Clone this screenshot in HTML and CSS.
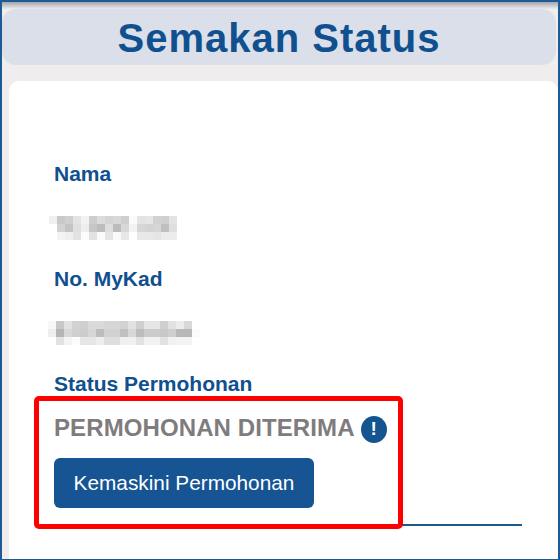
FILE: index.html
```html
<!DOCTYPE html>
<html lang="en">
<head>
    <meta charset="UTF-8">
    <meta name="viewport" content="width=device-width, initial-scale=1.0">
    <title>Semakan Status</title>
    <link rel="stylesheet" href="styles.css">
</head>
<body>
    <div class="screen">
        <div class="top-shadow"></div>
        <h1 class="title-bar">Semakan Status</h1>

        <div class="card">
            <div class="label first">Nama</div>
            <svg class="blur blur-name" width="128" height="24" shape-rendering="crispEdges" aria-hidden="true">
                <rect x="0" y="0" fill="#f0f0f0"/><rect x="8" y="0" fill="#c9c9c9"/><rect x="16" y="0" fill="#cfcfcf"/><rect x="24" y="0" fill="#e3e3e3"/><rect x="32" y="0" fill="#f2f2f2"/><rect x="40" y="0" fill="#cdcdcd"/><rect x="48" y="0" fill="#dcdcdc"/><rect x="56" y="0" fill="#d4d4d4"/><rect x="64" y="0" fill="#d8d8d8"/><rect x="72" y="0" fill="#cfcfcf"/><rect x="80" y="0" fill="#fbfbfb"/><rect x="88" y="0" fill="#e3e3e3"/><rect x="96" y="0" fill="#e6e6e6"/><rect x="104" y="0" fill="#d2d2d2"/><rect x="112" y="0" fill="#cfcfcf"/><rect x="120" y="0" fill="#e3e3e3"/>
                <rect x="8" y="8" fill="#d2d2d2"/><rect x="16" y="8" fill="#c4c4c4"/><rect x="24" y="8" fill="#e0e0e0"/><rect x="32" y="8" fill="#eeeeee"/><rect x="40" y="8" fill="#c6c6c6"/><rect x="48" y="8" fill="#bdbdbd"/><rect x="56" y="8" fill="#dedede"/><rect x="64" y="8" fill="#bcbcbc"/><rect x="72" y="8" fill="#d8d8d8"/><rect x="80" y="8" fill="#f3f3f3"/><rect x="88" y="8" fill="#d6d6d6"/><rect x="96" y="8" fill="#d3d3d3"/><rect x="104" y="8" fill="#d6d6d6"/><rect x="112" y="8" fill="#c0c0c0"/><rect x="120" y="8" fill="#dfdfdf"/>
                <rect x="8" y="16" fill="#f3f3f3"/><rect x="16" y="16" fill="#efefef"/><rect x="24" y="16" fill="#e2e2e2"/><rect x="32" y="16" fill="#fcfcfc"/><rect x="40" y="16" fill="#e2e2e2"/><rect x="48" y="16" fill="#fafafa"/><rect x="56" y="16" fill="#e5e5e5"/><rect x="64" y="16" fill="#fafafa"/><rect x="72" y="16" fill="#e8e8e8"/><rect x="88" y="16" fill="#e8e8e8"/><rect x="96" y="16" fill="#e8e8e8"/><rect x="104" y="16" fill="#e5e5e5"/><rect x="112" y="16" fill="#ececec"/><rect x="120" y="16" fill="#ececec"/>
            </svg>

            <div class="label">No. MyKad</div>
            <svg class="blur blur-id" width="152" height="24" shape-rendering="crispEdges" aria-hidden="true">
                <rect x="0" y="0" fill="#f8f8f8"/><rect x="8" y="0" fill="#c8c8c8"/><rect x="16" y="0" fill="#e2e2e2"/><rect x="24" y="0" fill="#d2d2d2"/><rect x="32" y="0" fill="#cfcfcf"/><rect x="40" y="0" fill="#dadada"/><rect x="48" y="0" fill="#dadada"/><rect x="56" y="0" fill="#d6d6d6"/><rect x="64" y="0" fill="#d6d6d6"/><rect x="72" y="0" fill="#d2d2d2"/><rect x="80" y="0" fill="#e2e2e2"/><rect x="88" y="0" fill="#d0d0d0"/><rect x="96" y="0" fill="#e6e6e6"/><rect x="104" y="0" fill="#e6e6e6"/><rect x="112" y="0" fill="#cfcfcf"/><rect x="120" y="0" fill="#e2e2e2"/><rect x="128" y="0" fill="#ececec"/><rect x="136" y="0" fill="#d8d8d8"/>
                <rect x="0" y="8" fill="#eeeeee"/><rect x="8" y="8" fill="#b5b5b5"/><rect x="16" y="8" fill="#d8d8d8"/><rect x="24" y="8" fill="#cfcfcf"/><rect x="32" y="8" fill="#cccccc"/><rect x="40" y="8" fill="#d6d6d6"/><rect x="48" y="8" fill="#bdbdbd"/><rect x="56" y="8" fill="#d2d2d2"/><rect x="64" y="8" fill="#d2d2d2"/><rect x="72" y="8" fill="#c0c0c0"/><rect x="80" y="8" fill="#d8d8d8"/><rect x="88" y="8" fill="#bdbdbd"/><rect x="96" y="8" fill="#cccccc"/><rect x="104" y="8" fill="#cccccc"/><rect x="112" y="8" fill="#c8c8c8"/><rect x="120" y="8" fill="#cfcfcf"/><rect x="128" y="8" fill="#b8b8b8"/><rect x="136" y="8" fill="#b8b8b8"/><rect x="144" y="8" fill="#fbfbfb"/>
                <rect x="8" y="16" fill="#e2e2e2"/><rect x="16" y="16" fill="#f4f4f4"/><rect x="24" y="16" fill="#fcfcfc"/><rect x="32" y="16" fill="#e6e6e6"/><rect x="40" y="16" fill="#e6e6e6"/><rect x="48" y="16" fill="#eeeeee"/><rect x="56" y="16" fill="#dedede"/><rect x="64" y="16" fill="#dedede"/><rect x="72" y="16" fill="#f0f0f0"/><rect x="80" y="16" fill="#f0f0f0"/><rect x="88" y="16" fill="#e2e2e2"/><rect x="96" y="16" fill="#f2f2f2"/><rect x="104" y="16" fill="#f2f2f2"/><rect x="112" y="16" fill="#e2e2e2"/><rect x="120" y="16" fill="#f2f2f2"/><rect x="128" y="16" fill="#f4f4f4"/><rect x="136" y="16" fill="#f4f4f4"/>
            </svg>

            <div class="label">Status Permohonan</div>
            <div class="status-row">
                <span class="status-text">PERMOHONAN DITERIMA</span>
                <span class="info-icon">!</span>
            </div>
            <button class="update-btn">Kemaskini Permohonan</button>
            <div class="field-line"></div>
        </div>

        <div class="highlight"></div>
    </div>
</body>
</html>
```

FILE: styles.css
```css
* {
    box-sizing: border-box;
}
body {
    margin: 0;
    font-family: "Liberation Sans", Arial, sans-serif;
}
.screen {
    position: relative;
    width: 560px;
    height: 560px;
    overflow: hidden;
    display: flex;
    flex-direction: column;
    padding-right: 2px;
    background-color: #f0edee;
    border: 1px solid #1d5a96;
    border-width: 2px 2px 1px 2px;
}
.top-shadow {
    height: 7px;
    flex: none;
    margin: 0 -2px;
    background: linear-gradient(#a2a6ad, #eceaec);
}
.title-bar {
    flex: none;
    height: 56px;
    margin: 0 0 16px 0;
    border-radius: 14px;
    background-color: #dadfe9;
    color: #10508f;
    font-size: 40px;
    line-height: 58px;
    letter-spacing: 1px;
    text-align: center;
}
.card {
    flex: 1;
    margin-left: 7px;
    margin-right: -2px;
    padding: 81px 36px 0 45px;
    border-radius: 10px 10px 0 0;
    background-color: white;
}
.label {
    height: 24px;
    margin-top: 27px;
    color: #10508f;
    font-size: 21px;
    font-weight: bold;
    line-height: 24px;
}
.label.first {
    margin-top: 0;
}
.blur {
    display: block;
    margin-top: 30px;
}
.blur rect {
    width: 8px;
    height: 8px;
}
.blur-name {
    margin-left: -5px;
}
.blur-id {
    margin-left: -6px;
}
.status-row {
    display: flex;
    align-items: center;
    gap: 6px;
    height: 28px;
    margin-top: 19px;
}
.status-text {
    margin-top: -2px;
    color: #7f7c7e;
    font-size: 24px;
    font-weight: bold;
    letter-spacing: 0.1px;
}
.info-icon {
    display: flex;
    align-items: center;
    justify-content: center;
    width: 26px;
    height: 27px;
    border-radius: 50%;
    background-color: #14548f;
    color: white;
    font-size: 19px;
    font-weight: bold;
}
.update-btn {
    display: block;
    width: 260px;
    height: 50px;
    margin-top: 15px;
    padding: 0;
    border: none;
    border-radius: 6px;
    background-color: #165493;
    color: white;
    font-family: inherit;
    font-size: 20.8px;
}
.field-line {
    height: 2px;
    margin-top: 16px;
    background-color: #1d5a8c;
}
.highlight {
    position: absolute;
    left: 32px;
    top: 394px;
    width: 369px;
    height: 133px;
    border: 5px solid #ff0000;
    border-radius: 5px;
}
```
